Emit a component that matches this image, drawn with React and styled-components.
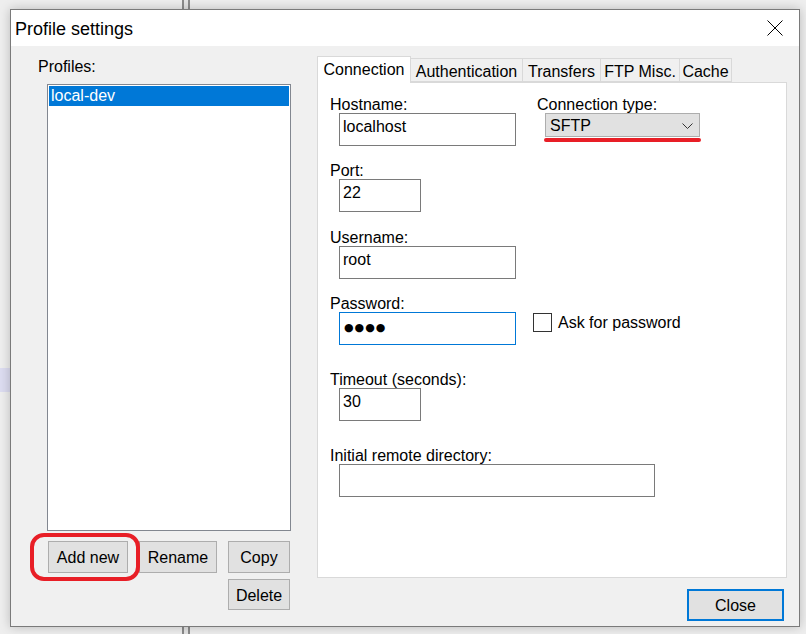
import React from "react";
import styled, { createGlobalStyle } from "styled-components";

const GlobalStyle = createGlobalStyle`
  html, body { margin: 0; padding: 0; }
  body {
    font-family: "Liberation Sans", Arial, sans-serif;
    background: #efefef;
    color: #000;
  }
  * { box-sizing: border-box; }
`;

const Desktop = styled.div`
  position: relative;
  width: 806px;
  height: 634px;
  overflow: hidden;
  background: #eeeeee;
  padding: 9px 0 0 10px;
`;

const DesktopSplitter = styled.div`
  position: absolute;
  left: 182px;
  top: 0;
  bottom: 0;
  width: 8px;
  border-left: 2px solid #8c8c8c;
  border-right: 2px solid #8c8c8c;
  background: #e4e4e4;
`;

const DesktopHighlight = styled.div`
  position: absolute;
  left: 0;
  top: 368px;
  width: 10px;
  height: 24px;
  background: #dcdcf0;
`;

const Dialog = styled.div`
  position: relative;
  width: 790px;
  height: 618px;
  border: 1px solid #7a7a7a;
  background: #f0f0f0;
  box-shadow: 0 0 10px rgba(0, 0, 0, 0.22);
  display: flex;
  flex-direction: column;
`;

const TitleBar = styled.div`
  height: 36px;
  flex: none;
  background: #fff;
  display: flex;
  align-items: center;
  padding-left: 4px;
  font-size: 18px;
`;

const Title = styled.div`
  flex: 1;
  padding-top: 3px;
`;

const TitleClose = styled.div`
  width: 46px;
  height: 36px;
  margin-right: 1px;
  display: flex;
  align-items: center;
  justify-content: center;
`;

const Body = styled.div`
  flex: 1;
  display: flex;
  padding-top: 10px;
`;

const LeftColumn = styled.div`
  width: 306px;
  flex: none;
  display: flex;
  flex-direction: column;
  padding-left: 27px;
`;

const SectionLabel = styled.div`
  font-size: 16px;
  line-height: 17px;
  padding-top: 1px;
  margin-top: 1px;
`;

const ListBox = styled.div`
  margin-top: 9px;
  margin-left: 9px;
  width: 244px;
  height: 447px;
  background: #fff;
  border: 1px solid #828790;
  padding: 1px;
`;

const ListItem = styled.div`
  height: 20px;
  line-height: 20px;
  font-size: 16px;
  padding-left: 2px;
  background: ${(p) => (p.$selected ? "#0078d7" : "transparent")};
  color: ${(p) => (p.$selected ? "#fff" : "#000")};
`;

const ButtonGrid = styled.div`
  margin-top: 10px;
  margin-left: 10px;
  display: grid;
  grid-template-columns: 80px 78px 62px;
  grid-template-rows: 32px 31px;
  column-gap: 11px;
  row-gap: 6px;
`;

const Button = styled.div`
  grid-column: ${(p) => p.$col || "auto"};
  grid-row: ${(p) => p.$row || "auto"};
  background: #e1e1e1;
  border: 1px solid #adadad;
  font-size: 16px;
  padding-top: 2px;
  display: flex;
  align-items: center;
  justify-content: center;
`;

const Highlighted = styled(Button)`
  position: relative;
  &::after {
    content: "";
    position: absolute;
    left: -19px;
    right: -13px;
    top: -9px;
    bottom: -9px;
    border: 4px solid #e81e26;
    border-radius: 14px;
  }
`;

const RightColumn = styled.div`
  width: 470px;
  flex: none;
  display: flex;
  flex-direction: column;
`;

const TabBar = styled.div`
  height: 26px;
  display: flex;
  align-items: flex-end;
  position: relative;
  z-index: 1;
`;

const Tab = styled.div`
  width: ${(p) => p.$w}px;
  height: ${(p) => (p.$active ? 27 : 24)}px;
  margin-left: ${(p) => (p.$first ? 0 : -1)}px;
  margin-bottom: ${(p) => (p.$active ? -1 : 0)}px;
  background: ${(p) => (p.$active ? "#fff" : "#f0f0f0")};
  border: 1px solid #d9d9d9;
  border-bottom: ${(p) => (p.$active ? "none" : "1px solid #d9d9d9")};
  font-size: 16px;
  line-height: 18px;
  display: flex;
  align-items: flex-start;
  padding-top: ${(p) => (p.$active ? 4 : 4)}px;
  justify-content: center;
`;

const Panel = styled.div`
  height: 496px;
  background: #fff;
  border: 1px solid #d9d9d9;
  padding: 12px 0 0 12px;
  display: flex;
  flex-direction: column;
`;

const FormRow = styled.div`
  display: flex;
  align-items: flex-start;
  margin-top: ${(p) => p.$mt || 0}px;
`;

const Field = styled.div`
  display: flex;
  flex-direction: column;
  width: ${(p) => p.$w || 186}px;
  margin-left: ${(p) => p.$ml || 0}px;
`;

const Label = styled.div`
  font-size: 16px;
  line-height: 17px;
  padding-top: 1px;
  white-space: nowrap;
`;

const Edit = styled.div`
  margin-left: 9px;
  width: ${(p) => p.$w}px;
  height: 33px;
  background: #fff;
  border: 1px solid ${(p) => (p.$focused ? "#0078d7" : "#7a7a7a")};
  padding: 4px 3px 0;
  font-size: 16px;
  line-height: 18px;
  white-space: nowrap;
`;

const PasswordDots = styled.span`
  font-family: "DejaVu Sans", sans-serif;
  font-size: 11px;
  letter-spacing: 1px;
  position: relative;
  top: 0px;
  left: 1px;
`;

const Select = styled.div`
  position: relative;
  margin-left: 8px;
  width: 155px;
  height: 24px;
  background: #e1e1e1;
  border: 1px solid #adadad;
  padding: 3px 0 0 4px;
  font-size: 16px;
  line-height: 18px;
  display: flex;
  justify-content: space-between;
  &::after {
    content: "";
    position: absolute;
    left: -2px;
    right: -2px;
    bottom: -6px;
    height: 4px;
    border-radius: 2px;
    background: #e81e26;
  }
`;

const Chevron = styled.svg`
  margin: 6px 6px 0 0;
`;

const CheckGroup = styled.div`
  display: flex;
  align-items: center;
  margin-left: 17px;
  margin-top: 19px;
  font-size: 16px;
`;

const CheckBox = styled.div`
  width: 19px;
  height: 19px;
  background: #fff;
  border: 1px solid #333;
  margin-right: 6px;
`;

const FooterRow = styled.div`
  display: flex;
  justify-content: flex-end;
  margin-top: 11px;
  padding-right: 3px;
`;

const DefaultButton = styled.div`
  width: 97px;
  height: 32px;
  background: #e1e1e1;
  border: 2px solid #0078d7;
  font-size: 16px;
  padding-top: 2px;
  display: flex;
  align-items: center;
  justify-content: center;
`;

const tabs = [
  { label: "Connection", w: 94, active: true },
  { label: "Authentication", w: 113 },
  { label: "Transfers", w: 79 },
  { label: "FTP Misc.", w: 80 },
  { label: "Cache", w: 53 },
];

export default function App() {
  return (
    <>
      <GlobalStyle />
      <Desktop>
        <DesktopSplitter />
        <DesktopHighlight />
        <Dialog>
          <TitleBar>
            <Title>Profile settings</Title>
            <TitleClose>
              <svg width="16" height="16" viewBox="0 0 16 16">
                <path d="M0.5 0.5 L15.5 15.5 M15.5 0.5 L0.5 15.5" stroke="#000" strokeWidth="1" fill="none" />
              </svg>
            </TitleClose>
          </TitleBar>
          <Body>
            <LeftColumn>
              <SectionLabel>Profiles:</SectionLabel>
              <ListBox>
                <ListItem $selected>local-dev</ListItem>
              </ListBox>
              <ButtonGrid>
                <Highlighted>Add new</Highlighted>
                <Button>Rename</Button>
                <Button>Copy</Button>
                <Button $col={3} $row={2}>Delete</Button>
              </ButtonGrid>
            </LeftColumn>
            <RightColumn>
              <TabBar>
                {tabs.map((t, i) => (
                  <Tab key={t.label} $w={t.w} $active={t.active} $first={i === 0}>
                    {t.label}
                  </Tab>
                ))}
              </TabBar>
              <Panel>
                <FormRow>
                  <Field>
                    <Label>Hostname:</Label>
                    <Edit $w={177}>localhost</Edit>
                  </Field>
                  <Field $ml={21} $w={170}>
                    <Label>Connection type:</Label>
                    <Select>
                      <span>SFTP</span>
                      <Chevron width="11" height="7" viewBox="0 0 11 7">
                        <path d="M0.5 0.5 L5.5 5.5 L10.5 0.5" stroke="#333" strokeWidth="1" fill="none" />
                      </Chevron>
                    </Select>
                  </Field>
                </FormRow>
                <FormRow $mt={15}>
                  <Field>
                    <Label>Port:</Label>
                    <Edit $w={82}>22</Edit>
                  </Field>
                </FormRow>
                <FormRow $mt={16}>
                  <Field>
                    <Label>Username:</Label>
                    <Edit $w={177}>root</Edit>
                  </Field>
                </FormRow>
                <FormRow $mt={15}>
                  <Field>
                    <Label>Password:</Label>
                    <Edit $w={177} $focused>
                      <PasswordDots>●●●●</PasswordDots>
                    </Edit>
                  </Field>
                  <CheckGroup>
                    <CheckBox />
                    <span>Ask for password</span>
                  </CheckGroup>
                </FormRow>
                <FormRow $mt={25}>
                  <Field>
                    <Label>Timeout (seconds):</Label>
                    <Edit $w={82}>30</Edit>
                  </Field>
                </FormRow>
                <FormRow $mt={25}>
                  <Field $w={330}>
                    <Label>Initial remote directory:</Label>
                    <Edit $w={316} />
                  </Field>
                </FormRow>
              </Panel>
              <FooterRow>
                <DefaultButton>Close</DefaultButton>
              </FooterRow>
            </RightColumn>
          </Body>
        </Dialog>
      </Desktop>
    </>
  );
}
